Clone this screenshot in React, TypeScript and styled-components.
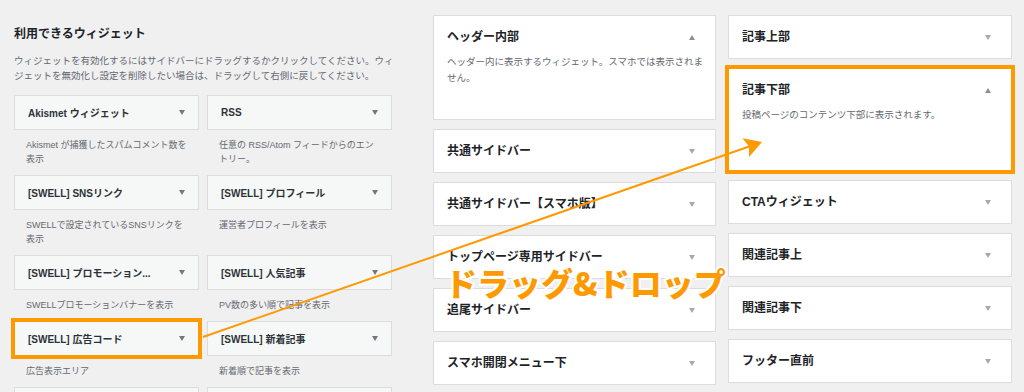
import React from "react";
import styled, { createGlobalStyle, css } from "styled-components";

const Global = createGlobalStyle`
  html, body { margin: 0; padding: 0; background: #f0f0f1; }
  body { font-family: "Liberation Sans", "Noto Sans CJK JP", sans-serif; }
  * { box-sizing: border-box; }
`;

const ORANGE = "#ff9900";

const Page = styled.div`
  position: relative;
  width: 1024px;
  height: 392px;
  overflow: hidden;
  background: #f0f0f1;
  display: flex;
  align-items: flex-start;
  padding: 15px 12px 0 14px;
`;

const LeftCol = styled.section`
  width: 378px;
  flex: 0 0 378px;
  margin-right: 41px;
  margin-top: -5px;
`;

const Title = styled.h2`
  margin: 15px 0 0;
  font-size: 12px;
  line-height: 18px;
  font-weight: 700;
  color: #1d2327;
`;

const Intro = styled.p`
  margin: 10px 0 0;
  font-size: 9.5px;
  line-height: 15px;
  color: #646970;
  white-space: nowrap;
`;

const WidgetGrid = styled.div`
  margin-top: 12px;
  display: grid;
  grid-template-columns: 185px 185px;
  column-gap: 8px;
  align-items: start;
`;

const WidgetItem = styled.div`
  display: flex;
  flex-direction: column;
`;

const Caret = styled.span<{ $up?: boolean; $light?: boolean }>`
  flex: 0 0 auto;
  width: 0;
  height: 0;
  border-left: 3.5px solid transparent;
  border-right: 3.5px solid transparent;
  ${(p) =>
    p.$up
      ? css`border-bottom: 5px solid ${p.$light ? "#8c8f94" : "#72777c"};`
      : css`border-top: 5px solid ${p.$light ? "#a7aaad" : "#72777c"};`}
`;

const WidgetCard = styled.div<{ $highlight?: boolean }>`
  height: 35px;
  display: flex;
  align-items: center;
  justify-content: space-between;
  padding: 0 13px;
  background: #f6f7f7;
  border: 1px solid ${(p) => (p.$highlight ? ORANGE : "#dcdcde")};
  ${(p) => p.$highlight && css`box-shadow: 0 0 0 3px ${ORANGE};`}
`;

const WidgetName = styled.span`
  font-size: 10px;
  font-weight: 700;
  color: #2c3338;
  white-space: nowrap;
`;

const WidgetDesc = styled.p`
  margin: 0;
  padding: 8px 12px 9px;
  font-size: 9px;
  line-height: 14px;
  color: #646970;
  white-space: nowrap;
`;

const SideCol = styled.div<{ $w: number; $gapRight?: number }>`
  width: ${(p) => p.$w}px;
  flex: 0 0 ${(p) => p.$w}px;
  margin-right: ${(p) => p.$gapRight ?? 0}px;
  display: flex;
  flex-direction: column;
  gap: 9px;
`;

const SideCard = styled.div<{ $minH?: number; $highlight?: boolean }>`
  background: #fff;
  border: 1px solid ${(p) => (p.$highlight ? ORANGE : "#dcdcde")};
  ${(p) => p.$highlight && css`box-shadow: 0 0 0 3px ${ORANGE};`}
  padding: 13px 13px 13px;
  min-height: ${(p) => p.$minH ?? 44}px;
`;

const SideHead = styled.div`
  display: flex;
  align-items: center;
  justify-content: space-between;
  height: 16px;
  padding-right: 7px;
`;

const SideTitle = styled.h3`
  margin: 0;
  font-size: 12px;
  line-height: 16px;
  font-weight: 700;
  color: #1d2327;
  white-space: nowrap;
`;

const SideDesc = styled.p`
  margin: 9px 0 0;
  font-size: 9.5px;
  line-height: 16px;
  color: #646970;
  white-space: nowrap;
`;

const Overlay = styled.svg`
  position: absolute;
  left: 0;
  top: 0;
  width: 1024px;
  height: 392px;
  pointer-events: none;
`;

const DragLabel = styled.div`
  position: absolute;
  left: 445px;
  top: 265px;
  font-family: "Noto Sans CJK JP", sans-serif;
  font-size: 32px;
  line-height: 34px;
  font-weight: 900;
  color: ${ORANGE};
  -webkit-text-stroke: 4px #fff;
  paint-order: stroke fill;
  white-space: nowrap;
  letter-spacing: 0;
`;

type Widget = { name: string; desc: React.ReactNode; hl?: boolean };

const widgets: Widget[] = [
  { name: "Akismet ウィジェット", desc: <>Akismet が捕獲したスパムコメント数を<br />表示</> },
  { name: "RSS", desc: <>任意の RSS/Atom フィードからのエン<br />トリー。</> },
  { name: "[SWELL] SNSリンク", desc: <>SWELLで設定されているSNSリンクを<br />表示</> },
  { name: "[SWELL] プロフィール", desc: "運営者プロフィールを表示" },
  { name: "[SWELL] プロモーション...", desc: "SWELLプロモーションバナーを表示" },
  { name: "[SWELL] 人気記事", desc: "PV数の多い順で記事を表示" },
  { name: "[SWELL] 広告コード", desc: "広告表示エリア", hl: true },
  { name: "[SWELL] 新着記事", desc: "新着順で記事を表示" },
  { name: "", desc: "" },
  { name: "", desc: "" },
];

type Area = { title: string; desc?: React.ReactNode; minH?: number; hl?: boolean };

const middle: Area[] = [
  { title: "ヘッダー内部", desc: <>ヘッダー内に表示するウィジェット。スマホでは表示されま<br />せん。</>, minH: 105 },
  { title: "共通サイドバー" },
  { title: "共通サイドバー【スマホ版】" },
  { title: "トップページ専用サイドバー" },
  { title: "追尾サイドバー" },
  { title: "スマホ開閉メニュー下" },
];

const right: Area[] = [
  { title: "記事上部" },
  { title: "記事下部", desc: "投稿ページのコンテンツ下部に表示されます。", minH: 103, hl: true },
  { title: "CTAウィジェット" },
  { title: "関連記事上" },
  { title: "関連記事下" },
  { title: "フッター直前" },
];

function AreaCard({ a }: { a: Area }) {
  return (
    <SideCard $minH={a.minH} $highlight={a.hl}>
      <SideHead>
        <SideTitle>{a.title}</SideTitle>
        <Caret $up={!!a.desc} $light />
      </SideHead>
      {a.desc && <SideDesc>{a.desc}</SideDesc>}
    </SideCard>
  );
}

export default function App() {
  const tip = { x: 762, y: 142 };
  return (
    <>
      <Global />
      <Page>
        <LeftCol>
          <Title>利用できるウィジェット</Title>
          <Intro>
            ウィジェットを有効化するにはサイドバーにドラッグするかクリックしてください。ウィ
            <br />
            ジェットを無効化し設定を削除したい場合は、ドラッグして右側に戻してください。
          </Intro>
          <WidgetGrid>
            {widgets.map((w, i) => (
              <WidgetItem key={i}>
                <WidgetCard $highlight={w.hl}>
                  {w.name && <WidgetName>{w.name}</WidgetName>}
                  {w.name && <Caret />}
                </WidgetCard>
                {w.desc && <WidgetDesc>{w.desc}</WidgetDesc>}
              </WidgetItem>
            ))}
          </WidgetGrid>
        </LeftCol>
        <SideCol $w={283} $gapRight={12}>
          {middle.map((a) => (
            <AreaCard key={a.title} a={a} />
          ))}
        </SideCol>
        <SideCol $w={284}>
          {right.map((a) => (
            <AreaCard key={a.title} a={a} />
          ))}
        </SideCol>
        <Overlay viewBox="0 0 1024 392">
          <line x1={203} y1={337} x2={752} y2={145.5} stroke={ORANGE} strokeWidth={2} />
          <polygon
            points={`${tip.x},${tip.y} 742.5,138.3 749,146.6 749,157`}
            fill={ORANGE}
          />
        </Overlay>
        <DragLabel>ドラッグ&amp;ドロップ</DragLabel>
      </Page>
    </>
  );
}
